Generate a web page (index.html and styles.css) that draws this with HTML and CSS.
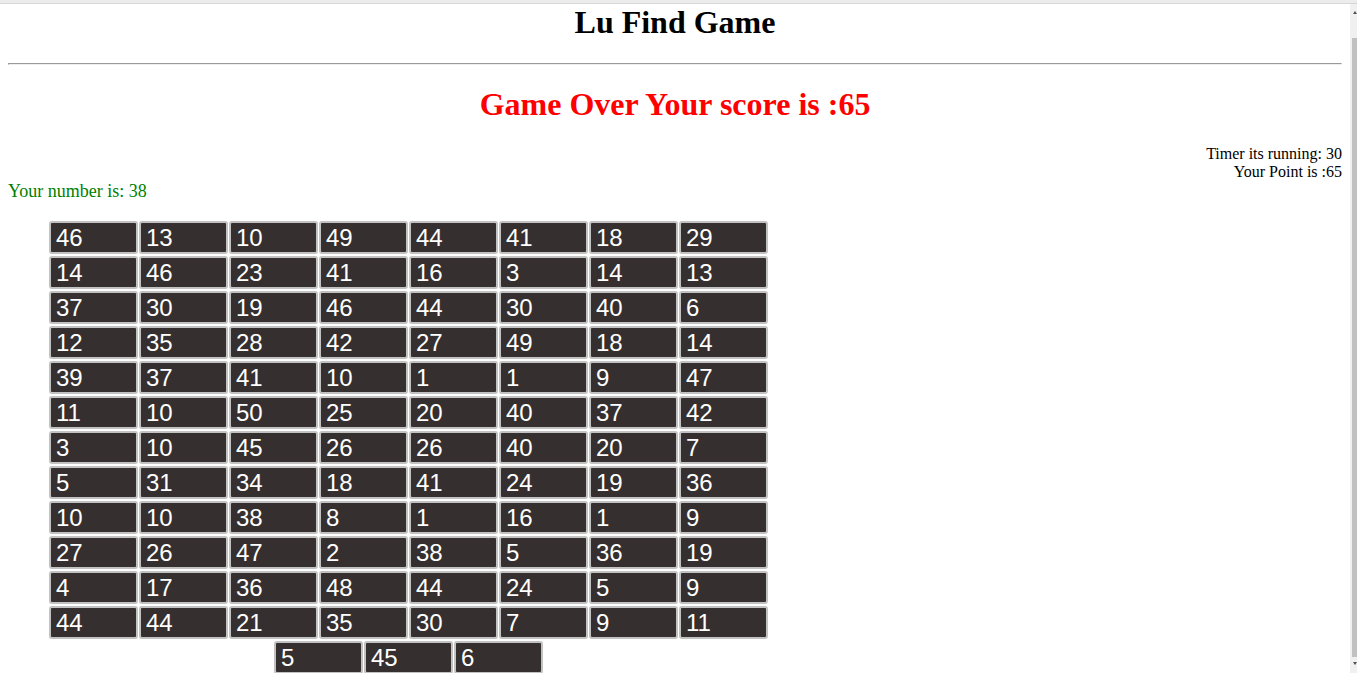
FILE: index.html
```html
<!DOCTYPE html>
<html>
<head>
<meta charset="utf-8">
<title>Lu Find Game</title>
<link rel="stylesheet" href="styles.css">
</head>
<body>
<div class="chrome-top"></div>
<div class="viewport">
  <div class="page">
    <h1 class="title">Lu Find Game</h1>
    <hr>
    <h1 class="gameover">Game Over Your score is :65</h1>
    <div class="status">
      <div>Timer its running: 30</div>
      <div>Your Point is :65</div>
    </div>
    <div class="target">Your number is: 38</div>
    <div class="board">
      <button class="cell">46</button><button class="cell">13</button><button class="cell">10</button><button class="cell">49</button><button class="cell">44</button><button class="cell">41</button><button class="cell">18</button><button class="cell">29</button>
      <button class="cell">14</button><button class="cell">46</button><button class="cell">23</button><button class="cell">41</button><button class="cell">16</button><button class="cell">3</button><button class="cell">14</button><button class="cell">13</button>
      <button class="cell">37</button><button class="cell">30</button><button class="cell">19</button><button class="cell">46</button><button class="cell">44</button><button class="cell">30</button><button class="cell">40</button><button class="cell">6</button>
      <button class="cell">12</button><button class="cell">35</button><button class="cell">28</button><button class="cell">42</button><button class="cell">27</button><button class="cell">49</button><button class="cell">18</button><button class="cell">14</button>
      <button class="cell">39</button><button class="cell">37</button><button class="cell">41</button><button class="cell">10</button><button class="cell">1</button><button class="cell">1</button><button class="cell">9</button><button class="cell">47</button>
      <button class="cell">11</button><button class="cell">10</button><button class="cell">50</button><button class="cell">25</button><button class="cell">20</button><button class="cell">40</button><button class="cell">37</button><button class="cell">42</button>
      <button class="cell">3</button><button class="cell">10</button><button class="cell">45</button><button class="cell">26</button><button class="cell">26</button><button class="cell">40</button><button class="cell">20</button><button class="cell">7</button>
      <button class="cell">5</button><button class="cell">31</button><button class="cell">34</button><button class="cell">18</button><button class="cell">41</button><button class="cell">24</button><button class="cell">19</button><button class="cell">36</button>
      <button class="cell">10</button><button class="cell">10</button><button class="cell">38</button><button class="cell">8</button><button class="cell">1</button><button class="cell">16</button><button class="cell">1</button><button class="cell">9</button>
      <button class="cell">27</button><button class="cell">26</button><button class="cell">47</button><button class="cell">2</button><button class="cell">38</button><button class="cell">5</button><button class="cell">36</button><button class="cell">19</button>
      <button class="cell">4</button><button class="cell">17</button><button class="cell">36</button><button class="cell">48</button><button class="cell">44</button><button class="cell">24</button><button class="cell">5</button><button class="cell">9</button>
      <button class="cell">44</button><button class="cell">44</button><button class="cell">21</button><button class="cell">35</button><button class="cell">30</button><button class="cell">7</button><button class="cell">9</button><button class="cell">11</button>
      <button class="cell">5</button><button class="cell">45</button><button class="cell">6</button>
    </div>
  </div>
  <div class="scrollbar">
    <div class="arrow up"></div>
    <div class="thumb"></div>
    <div class="arrow down"></div>
  </div>
</div>
</body>
</html>
```
FILE: styles.css
```css
html, body {
  margin: 0;
  padding: 0;
  overflow: hidden;
  background: #ffffff;
}
body {
  font-family: "Liberation Serif", "Times New Roman", serif;
  font-size: 16px;
  color: #000;
}
.chrome-top {
  height: 3px;
  background: #ececec;
  border-bottom: 1px solid #d6d6d6;
}
.viewport {
  display: flex;
  height: 669px;
  overflow: hidden;
}
.page {
  flex: 1;
  padding: 0 8px;
  overflow: hidden;
}
.title {
  font-size: 32px;
  font-weight: bold;
  text-align: center;
  margin: 0 0 22.44px;
}
hr {
  margin: 8px 0;
  border: 1px solid #9a9a9a;
  border-bottom-color: #eeeeee;
  border-right-color: #eeeeee;
  height: 0;
}
.gameover {
  font-size: 32px;
  font-weight: bold;
  text-align: center;
  color: #ff0000;
  margin: 20.44px 0 22.44px;
}
.status {
  text-align: right;
}
.target {
  font-size: 18px;
  color: #008000;
}
.board {
  display: flex;
  flex-wrap: wrap;
  justify-content: center;
  column-gap: 1px;
  row-gap: 2px;
  width: 719px;
  margin: 19px 0 0 41px;
}
.cell {
  box-sizing: border-box;
  width: 89px;
  height: 33px;
  background: #352f2f;
  color: #ffffff;
  border: 2px solid #c2c2c2;
  border-radius: 3px;
  font-family: "Liberation Sans", Arial, sans-serif;
  font-size: 24px;
  text-align: left;
  padding: 0 0 0 5px;
  line-height: 29px;
  margin: 0;
}
.scrollbar {
  width: 7px;
  background: #f0f0f0;
  display: flex;
  flex-direction: column;
  align-items: flex-end;
}
.arrow {
  width: 0;
  height: 0;
  border-left: 2.5px solid transparent;
  border-right: 2.5px solid transparent;
}
.arrow.up {
  border-bottom: 3px solid #505050;
  margin-top: 7px;
  margin-bottom: 24px;
}
.arrow.down {
  border-top: 3px solid #505050;
  margin-top: 5px;
}
.thumb {
  width: 5px;
  height: 619px;
  background: #c1c1c1;
}
```
